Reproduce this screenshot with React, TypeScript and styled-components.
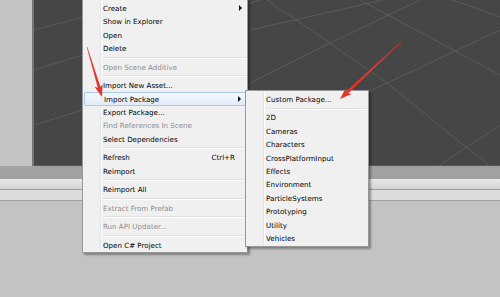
import React from "react";
import styled, { createGlobalStyle, css } from "styled-components";

const GlobalStyle = createGlobalStyle`
  html, body {
    margin: 0;
    padding: 0;
    background: #c3c3c3;
  }
  body {
    font-family: "DejaVu Sans", "Liberation Sans", sans-serif;
  }
`;

const Page = styled.div`
  position: relative;
  width: 500px;
  height: 297px;
  overflow: hidden;
  display: flex;
  flex-direction: column;
  background: #c3c3c3;
`;

const TopArea = styled.div`
  display: flex;
  height: 166px;
`;

const LeftPanel = styled.div`
  width: 32px;
  background: #c4c4c4;
  border-right: 2px solid #767676;
`;

const Scene = styled.div`
  flex: 1;
  background: #464646;
  border-bottom: 1px solid #575757;
  svg {
    display: block;
  }
`;

const Band = styled.div`
  height: 13px;
  background: #a1a1a1;
`;

const Toolbar = styled.div`
  height: 10px;
  background: linear-gradient(#e9e9e9, #d3d3d3);
  border-bottom: 1px solid #9c9c9c;
`;

const SubBar = styled.div`
  height: 10px;
  background: #dcdcdc;
  border-bottom: 1px solid #a0a0a0;
`;

const Rest = styled.div`
  flex: 1;
  background: #c3c3c3;
`;

const MenuBox = styled.div<{ $left: number; $top: number; $width: number }>`
  position: absolute;
  left: ${(p) => p.$left}px;
  top: ${(p) => p.$top}px;
  width: ${(p) => p.$width}px;
  box-sizing: border-box;
  padding: 1.8px 0 0.6px;
  background: #f0f0f0;
  border: 1px solid #979797;
  box-shadow: 2px 2px 2px rgba(0, 0, 0, 0.35);
  font-size: 7.1px;
  z-index: 2;
  &::before {
    content: "";
    position: absolute;
    left: 17px;
    top: 0;
    bottom: 0;
    width: 1px;
    background: #e2e3e3;
    border-right: 1px solid #ffffff;
  }
`;

const Item = styled.div<{ $disabled?: boolean; $active?: boolean }>`
  position: relative;
  display: flex;
  align-items: center;
  height: 13.4px;
  box-sizing: border-box;
  padding: 0 5px 0 20px;
  color: ${(p) => (p.$disabled ? "#8e8e8e" : "#000000")};
  white-space: nowrap;
  ${(p) =>
    p.$active &&
    css`
      margin: 0 1px;
      padding-left: 19px;
      padding-right: 4px;
      border: 1px solid #a9c8ec;
      border-radius: 2px;
      background: linear-gradient(#f3f8fd, #e1ebf8);
    `}
`;

const Label = styled.span`
  flex: 1;
`;

const Shortcut = styled.span`
  margin-right: -1px;
`;

const ArrowSlot = styled.span`
  width: 8px;
  display: flex;
  justify-content: flex-end;
`;

const Triangle = styled.span`
  width: 0;
  height: 0;
  border-left: 3px solid #111;
  border-top: 3px solid transparent;
  border-bottom: 3px solid transparent;
`;

const Separator = styled.div`
  position: relative;
  height: 5.1px;
  display: flex;
  align-items: center;
  margin-left: 19px;
  margin-right: 1px;
  &::after {
    content: "";
    flex: 1;
    height: 1px;
    background: #e0e0e0;
    border-bottom: 1px solid #ffffff;
  }
`;

const Overlay = styled.svg`
  position: absolute;
  left: 0;
  top: 0;
  z-index: 3;
  pointer-events: none;
`;

type Entry =
  | { sep: true }
  | { label: string; disabled?: boolean; active?: boolean; sub?: boolean; shortcut?: string };

const mainMenu: Entry[] = [
  { label: "Create", sub: true },
  { label: "Show in Explorer" },
  { label: "Open" },
  { label: "Delete" },
  { sep: true },
  { label: "Open Scene Additive", disabled: true },
  { sep: true },
  { label: "Import New Asset..." },
  { label: "Import Package", active: true, sub: true },
  { label: "Export Package..." },
  { label: "Find References In Scene", disabled: true },
  { label: "Select Dependencies" },
  { sep: true },
  { label: "Refresh", shortcut: "Ctrl+R" },
  { label: "Reimport" },
  { sep: true },
  { label: "Reimport All" },
  { sep: true },
  { label: "Extract From Prefab", disabled: true },
  { sep: true },
  { label: "Run API Updater...", disabled: true },
  { sep: true },
  { label: "Open C# Project" },
];

const packageMenu: Entry[] = [
  { label: "Custom Package..." },
  { sep: true },
  { label: "2D" },
  { label: "Cameras" },
  { label: "Characters" },
  { label: "CrossPlatformInput" },
  { label: "Effects" },
  { label: "Environment" },
  { label: "ParticleSystems" },
  { label: "Prototyping" },
  { label: "Utility" },
  { label: "Vehicles" },
];

const Menu = ({ items, left, top, width, slots }: { items: Entry[]; left: number; top: number; width: number; slots?: boolean }) => (
  <MenuBox $left={left} $top={top} $width={width}>
    {items.map((it, i) =>
      "sep" in it ? (
        <Separator key={i} />
      ) : (
        <Item key={i} $disabled={it.disabled} $active={it.active}>
          <Label>{it.label}</Label>
          {it.shortcut && <Shortcut>{it.shortcut}</Shortcut>}
          {slots && <ArrowSlot>{it.sub && <Triangle />}</ArrowSlot>}
        </Item>
      )
    )}
  </MenuBox>
);

const gridLines: [number, number, number, number][] = [
  [34, 30, 150, 0],
  [34, 70, 260, 0],
  [34, 125, 82, 110],
  [250, 30, 383, 0],
  [250, 83, 330, 43],
  [330, 43, 420, 0],
  [267, 0, 330, 43],
  [330, 43, 387, 83],
  [387, 83, 457, 140],
  [457, 140, 490, 166],
  [360, 0, 500, 75],
  [453, 0, 500, 17],
  [368, 92, 500, 30],
  [438, 166, 500, 125],
];

// tapered red arrow from tail to tip
const arrowPoints = (tx: number, ty: number, px: number, py: number) => {
  const dx = px - tx;
  const dy = py - ty;
  const len = Math.hypot(dx, dy);
  const ux = dx / len;
  const uy = dy / len;
  const nx = -uy;
  const ny = ux;
  const headLen = 12;
  const bx = px - ux * headLen;
  const by = py - uy * headLen;
  const pt = (x: number, y: number, w: number) => [
    [x + nx * w, y + ny * w],
    [x - nx * w, y - ny * w],
  ];
  const [t1, t2] = pt(tx, ty, 0.3);
  const [s1, s2] = pt(bx + ux * 2, by + uy * 2, 1.4);
  const [h1, h2] = pt(bx, by, 4.2);
  const pts = [t1, s1, h1, [px, py], h2, s2, t2];
  return pts.map((p) => p.map((v) => v.toFixed(2)).join(",")).join(" ");
};

export default function App() {
  return (
    <>
      <GlobalStyle />
      <Page>
        <TopArea>
          <LeftPanel />
          <Scene>
            <svg width="100%" height="165" viewBox="34 0 466 165" preserveAspectRatio="none">
              {gridLines.map(([x1, y1, x2, y2], i) => (
                <line key={i} x1={x1} y1={y1} x2={x2} y2={y2} stroke="#616161" strokeWidth="0.8" />
              ))}
            </svg>
          </Scene>
        </TopArea>
        <Band />
        <Toolbar />
        <SubBar />
        <Rest />

        <Menu items={mainMenu} left={82} top={-1} width={166} slots />
        <Menu items={packageMenu} left={245} top={90} width={124} />

        <Overlay width="500" height="297" viewBox="0 0 500 297">
          <polygon points={arrowPoints(87, 47, 102, 97)} fill="#e8342b" />
          <polygon points={arrowPoints(401, 42, 340, 99)} fill="#e8342b" />
        </Overlay>
      </Page>
    </>
  );
}
